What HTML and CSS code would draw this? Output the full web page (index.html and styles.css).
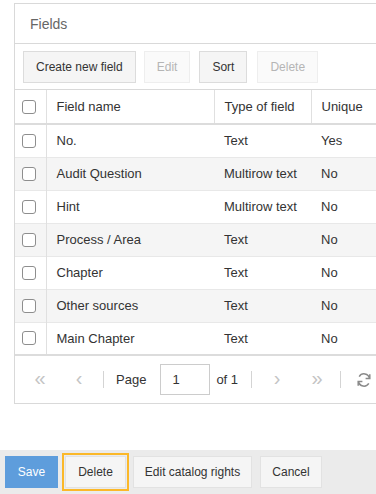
FILE: index.html
```html
<!DOCTYPE html>
<html lang="en">
  <head>
    <meta charset="utf-8" />
    <title>Fields</title>
    <link rel="stylesheet" href="styles.css">
  </head>
  <body>
    <div class="page">
      <div class="panel">
        <div class="panel-head">Fields</div>
        <div class="toolbar">
          <button class="btn">Create new field</button>
          <button class="btn" disabled>Edit</button>
          <button class="btn">Sort</button>
          <button class="btn" disabled>Delete</button>
        </div>
        <table class="grid">
          <thead>
            <tr>
              <th class="col-check"><span class="check"></span></th>
              <th class="col-name">Field name</th>
              <th class="col-type">Type of field</th>
              <th class="col-unique">Unique</th>
            </tr>
          </thead>
          <tbody>
            <tr><td class="col-check"><span class="check"></span></td><td>No.</td><td>Text</td><td>Yes</td></tr>
            <tr class="alt"><td class="col-check"><span class="check"></span></td><td>Audit Question</td><td>Multirow text</td><td>No</td></tr>
            <tr><td class="col-check"><span class="check"></span></td><td>Hint</td><td>Multirow text</td><td>No</td></tr>
            <tr class="alt"><td class="col-check"><span class="check"></span></td><td>Process / Area</td><td>Text</td><td>No</td></tr>
            <tr><td class="col-check"><span class="check"></span></td><td>Chapter</td><td>Text</td><td>No</td></tr>
            <tr class="alt"><td class="col-check"><span class="check"></span></td><td>Other sources</td><td>Text</td><td>No</td></tr>
            <tr><td class="col-check"><span class="check"></span></td><td>Main Chapter</td><td>Text</td><td>No</td></tr>
          </tbody>
        </table>
        <div class="pager">
          <span class="pg-btn first">&laquo;</span>
          <span class="pg-btn prev">&lsaquo;</span>
          <span class="sep sep-1"></span>
          <span class="pg-label page-lbl">Page</span>
          <span class="pg-input">1</span>
          <span class="pg-label of-lbl">of 1</span>
          <span class="sep sep-2"></span>
          <span class="pg-btn next">&rsaquo;</span>
          <span class="pg-btn last">&raquo;</span>
          <span class="sep sep-3"></span>
          <span class="refresh">
            <svg width="16" height="16" viewBox="0 0 16 16" fill="none" stroke="#8a8a8a" stroke-width="1.5">
              <path d="M13.5 6.5A5.6 5.6 0 0 0 3.2 4.6"/>
              <path d="M13.8 2.2v4.4H9.6"/>
              <path d="M2.5 9.5a5.6 5.6 0 0 0 10.3 1.9"/>
              <path d="M2.2 13.8V9.4h4.2"/>
            </svg>
          </span>
        </div>
      </div>
    </div>
    <div class="footer">
      <button class="btn primary">Save</button>
      <button class="btn focused">Delete</button>
      <button class="btn rights">Edit catalog rights</button>
      <button class="btn cancel">Cancel</button>
    </div>
  </body>
</html>
```

FILE: styles.css
```css
html,body{height:100%}
body{
  margin:0;
  color:#333;
  background:#fff;
  font:13px 'Liberation Sans',Arial,sans-serif;
  overflow:hidden;
  display:flex;
  flex-direction:column;
}
*{box-sizing:border-box}

.page{
  flex:1;
  padding:3px 0 0 14px;
  overflow:hidden;
}
.panel{
  width:calc(100% + 40px);
  border:1px solid #d9d9d9;
}
.panel-head{
  height:40px;
  padding:0 15px;
  display:flex;
  align-items:center;
  font-size:14px;
  color:#666;
  border-bottom:1px solid #d9d9d9;
}

.btn{
  height:32px;
  padding:0 12px;
  font:12px 'Liberation Sans',Arial,sans-serif;
  color:#333;
  background:#f5f5f5;
  border:1px solid #dcdcdc;
  border-radius:0;
  white-space:nowrap;
}
.btn:disabled{
  color:#b5b5b5;
  background:#fafafa;
  border-color:#eee;
}

.toolbar{
  display:flex;
  gap:8px;
  padding:7px 8px 6px;
  border-bottom:1px solid #d9d9d9;
}
.toolbar .btn:nth-child(2){margin-right:1px}
.toolbar .btn:nth-child(3){margin-right:2px}

.grid{
  width:100%;
  border-collapse:collapse;
}
.grid th,
.grid td{
  height:33px;
  padding:0 10px;
  text-align:left;
  font-weight:normal;
  white-space:nowrap;
}
.grid th{
  height:34px;
  border-right:1px solid #e0e0e0;
  border-bottom:2px solid #dcdcdc;
}
.grid td{
  border-top:1px solid #e8e8e8;
}
.grid tbody tr:first-child td{border-top:0}
.grid tbody tr:last-child td{border-bottom:2px solid #dcdcdc}
.grid tr.alt td{background:#f5f5f5}
.grid .col-check{
  width:31px;
  padding:0 0 0 7px;
  border-right:1px solid #e0e0e0;
}
.grid .col-name{width:168px}
.grid .col-type{width:97px}
.check{
  display:block;
  width:14px;
  height:14px;
  border:1px solid #8e8e8e;
  border-radius:3px;
  background:#fff;
}

.pager{
  height:47px;
  display:flex;
  align-items:center;
  padding-left:18px;
  color:#333;
}
.pg-btn{
  width:14px;
  text-align:center;
  font-size:20px;
  color:#c4c4c4;
  line-height:1;
  margin-top:-3px;
}
.prev{margin-left:25px}
.next{margin-left:18px}
.last{margin-left:26px}
.sep{
  width:1px;
  height:17px;
  background:#d4d4d4;
}
.sep-1{margin-left:17px}
.sep-2{margin-left:13px}
.sep-3{margin-left:16px}
.pg-label{font-size:13px}
.page-lbl{margin-left:12px}
.pg-input{
  width:50px;
  height:31px;
  margin-left:14px;
  padding-left:11px;
  display:flex;
  align-items:center;
  border:1px solid #ccc;
}
.of-lbl{margin-left:6px}
.refresh{
  margin-left:15px;
  display:flex;
}

.footer{
  height:44px;
  flex:none;
  display:flex;
  align-items:center;
  gap:7px;
  padding:0 5px;
  background:#ebebeb;
}
.footer .btn{
  padding:0;
  border-color:#e2e2e2;
}
.footer .primary{
  width:53px;
  color:#fff;
  background:#5e9ddc;
  border-color:#5e9ddc;
}
.footer .focused{
  width:61px;
  outline:2px solid #fbb829;
  outline-offset:1px;
}
.footer .rights{width:119px}
.footer .cancel{width:62px;margin-left:1px}
```
